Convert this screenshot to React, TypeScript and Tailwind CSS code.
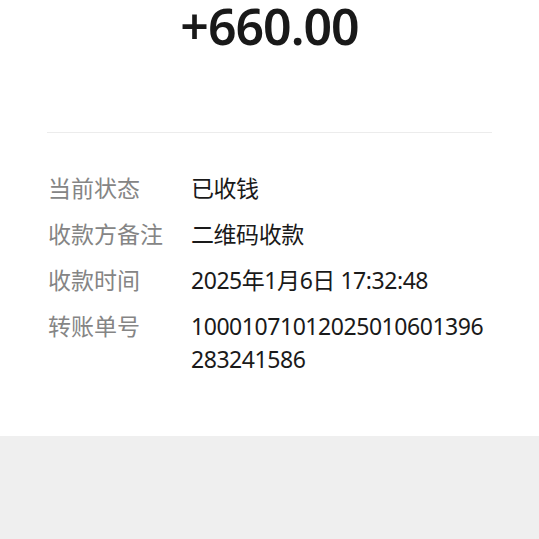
const rows = [
  { label: "当前状态", lines: ["已收钱"] },
  { label: "收款方备注", lines: ["二维码收款"] },
  { label: "收款时间", lines: ["2025年1月6日 17:32:48"] },
  { label: "转账单号", lines: ["10001071012025010601396", "283241586"] },
];

export default function App() {
  return (
    <div className="min-h-[539px] bg-[#efefef] font-['Noto_Sans','Noto_Sans_CJK_SC',sans-serif]">
      <div className="bg-white">
        <div className="pt-px text-center text-[50px] font-semibold leading-[50px] tracking-[-1px] text-[#191919]">
          +660.00
        </div>
        <div className="mx-[47px] mt-[81px] border-t border-[#ececec]" />
        <div className="flex flex-col gap-[13px] px-[48px] pb-[60px] pt-[39px] text-[23px] leading-[33px]">
          {rows.map((r) => (
            <div key={r.label} className="flex">
              <div className="w-[143px] shrink-0 text-[#858585]">{r.label}</div>
              <div className="tracking-[-0.45px] text-[#1a1a1a]">
                {r.lines.map((l) => (
                  <div key={l}>{l}</div>
                ))}
              </div>
            </div>
          ))}
        </div>
      </div>
    </div>
  );
}
